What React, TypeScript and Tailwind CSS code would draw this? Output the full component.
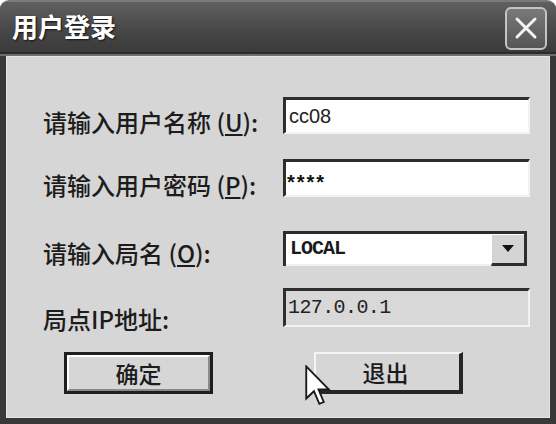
import React from "react";

const cjk = { fontFamily: '"Noto Sans CJK SC", "Noto Sans", sans-serif' };
const mono = { fontFamily: '"Liberation Mono", monospace' };
const sans = { fontFamily: '"Liberation Sans", Arial, sans-serif' };

function Label({ children, pt }: { children: React.ReactNode; pt: string }) {
  return (
    <div
      className={`w-[240px] shrink-0 text-[24px] leading-[24px] text-[#1c1c1c] font-medium whitespace-nowrap ${pt}`}
      style={cjk}
    >
      {children}
    </div>
  );
}

function Sunken({ children, className }: { children?: React.ReactNode; className: string }) {
  return (
    <div
      className={`border-t-[3px] border-l-[3px] border-t-[#2e2e2e] border-l-[#2e2e2e] border-b-2 border-r-2 border-b-[#f2f2f2] border-r-[#f2f2f2] flex items-center ${className}`}
    >
      {children}
    </div>
  );
}

export default function App() {
  return (
    <div className="w-[556px] h-[424px] bg-white">
      <div className="w-[556px] h-[424px] rounded-t-[9px] bg-[#383838] flex flex-col overflow-hidden relative border-t-2 border-[#7a7a7a]">
        {/* Title bar */}
        <div className="h-[52px] flex items-center justify-between pl-[12px] pr-[9px] bg-gradient-to-b from-[#606060] via-[#4a4a4a] to-[#3a3a3a] border-b-2 border-[#2c2c2c]">
          <div
            className="text-white text-[26px] font-bold leading-none tracking-[0px] mt-[-2px]"
            style={{ ...cjk, textShadow: "1px 1px 2px #111" }}
          >
            用户登录
          </div>
          <div className="w-[42px] h-[43px] rounded-[6px] border-2 border-[#c4c4c4] bg-gradient-to-b from-[#7a7a7a] to-[#555] flex items-center justify-center mt-[2px]">
            <svg width="26" height="26" viewBox="0 0 26 26">
              <path d="M4 4 L22 22 M22 4 L4 22" stroke="#f4f4f4" strokeWidth="3" strokeLinecap="round" />
            </svg>
          </div>
        </div>
        <div className="h-[2px] bg-[#6e6e6e]"></div>

        {/* Content */}
        <div className="flex-1 ml-[6px] mr-[6px] mb-[6px] bg-[#d6d6d6] relative border border-[#e4e4e4] flex flex-col pl-[36px]">
          {/* Row 1 */}
          <div className="flex h-[37px] mt-[40px]">
            <Label pt="pt-[13px]">
              请输入用户名称 (<u>U</u>):
            </Label>
            <Sunken className="w-[247px] h-[37px] bg-white pl-[3px]">
              <span className="text-[20px] text-[#222]" style={sans}>cc08</span>
            </Sunken>
          </div>
          {/* Row 2 */}
          <div className="flex h-[38px] mt-[25px]">
            <Label pt="pt-[14px]">
              请输入用户密码 (<u>P</u>):
            </Label>
            <Sunken className="w-[247px] h-[38px] bg-white pl-[1px]">
              <span className="text-[20px] font-bold text-[#111] tracking-[2px] mt-[6px]" style={sans}>****</span>
            </Sunken>
          </div>
          {/* Row 3 */}
          <div className="flex h-[35px] mt-[34px]">
            <Label pt="pt-[10px]">
              请输入局名 (<u>O</u>):
            </Label>
            <div className="w-[244px] h-[35px] border-t-[3px] border-l-[3px] border-r-[3px] border-[#2e2e2e] bg-white flex items-stretch">
              <div className="flex-1 flex items-center pl-[4px] border-b-2 border-[#f0f0f0]">
                <span className="text-[20px] font-bold text-[#1a1a1a] tracking-[-1px]" style={mono}>LOCAL</span>
              </div>
              <div className="w-[33px] bg-[#d4d4d4] border-t border-l border-white border-b-[3px] border-b-[#2e2e2e] flex items-center justify-center">
                <svg width="12" height="8" viewBox="0 0 12 8">
                  <path d="M0 0 L12 0 L6 7 Z" fill="#111" />
                </svg>
              </div>
            </div>
          </div>
          {/* Row 4 */}
          <div className="flex h-[39px] mt-[22px]">
            <Label pt="pt-[19px]">局点IP地址:</Label>
            <Sunken className="w-[247px] h-[39px] bg-[#d8d8d8] pl-[2px]">
              <span className="text-[20px] text-[#222] tracking-[-0.6px]" style={mono}>127.0.0.1</span>
            </Sunken>
          </div>
          {/* Buttons */}
          <div className="flex h-[42px] mt-[25px] pl-[21px]">
            <div className="w-[149px] h-[42px] border-[3px] border-[#1e1e1e]">
              <div className="w-full h-full border-t-2 border-l-2 border-white border-b-2 border-r-2 border-b-[#8a8a8a] border-r-[#8a8a8a] flex items-center justify-center">
                <span className="text-[23px] font-medium text-[#1c1c1c] leading-none" style={cjk}>确定</span>
              </div>
            </div>
            <div className="w-[149px] h-[42px] ml-[101px] border-t-2 border-l-2 border-[#f4f4f4] border-b-[4px] border-r-[4px] border-b-[#262626] border-r-[#262626] flex items-center justify-center">
              <span className="text-[23px] font-medium text-[#1c1c1c] leading-none pr-[4px]" style={cjk}>退出</span>
            </div>
          </div>

          {/* Mouse cursor */}
          <svg
            className="absolute left-[298px] top-[308px]"
            width="26"
            height="42"
            viewBox="0 0 12.5 20"
          >
            <path
              d="M0.6 0.6 L0.6 16 L4.3 12.5 L6.9 18.6 L9 17.7 L6.5 11.6 L11.4 11.6 Z"
              fill="#ffffff"
              stroke="#1a1a1a"
              strokeWidth="0.9"
              strokeLinejoin="miter"
            />
          </svg>
        </div>
      </div>
    </div>
  );
}
